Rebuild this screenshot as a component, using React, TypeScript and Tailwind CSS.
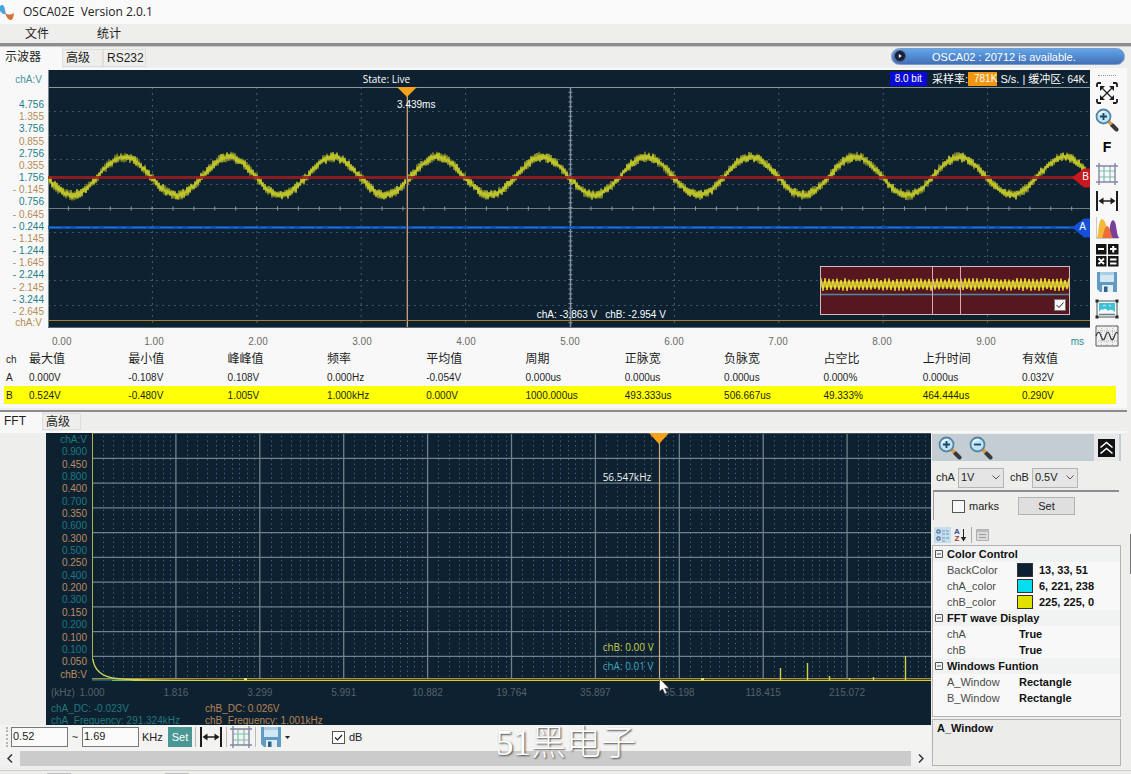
import React from 'react';

const scopeLabels = [
  '4.756', '1.355', '3.756', '0.855', '2.756', '0.355', '1.756', '- 0.145', '0.756',
  '- 0.645', '- 0.244', '- 1.145', '- 1.244', '- 1.645', '- 2.244', '- 2.145', '- 3.244', '- 2.645',
];
const timeLabels = ['0.00', '1.00', '2.00', '3.00', '4.00', '5.00', '6.00', '7.00', '8.00', '9.00'];
const fftLabels = [
  'chA:V', '0.900', '0.450', '0.800', '0.400', '0.700', '0.350', '0.600', '0.300', '0.500',
  '0.250', '0.400', '0.200', '0.300', '0.150', '0.200', '0.100', '0.100', '0.050', 'chB:V',
];
const freqLabels = ['1.000', '1.816', '3.299', '5.991', '10.882', '19.764', '35.897', '65.198', '118.415', '215.072'];

const measureHead = ['ch', '最大值', '最小值', '峰峰值', '频率', '平均值', '周期', '正脉宽', '负脉宽', '占空比', '上升时间', '有效值'];
const measureA = ['A', '0.000V', '-0.108V', '0.108V', '0.000Hz', '-0.054V', '0.000us', '0.000us', '0.000us', '0.000%', '0.000us', '0.032V'];
const measureB = ['B', '0.524V', '-0.480V', '1.005V', '1.000kHz', '0.000V', '1000.000us', '493.333us', '506.667us', '49.333%', '464.444us', '0.290V'];

const noise = (i: number) => {
  const v = Math.sin(i * 12.9898) * 43758.5453;
  return v - Math.floor(v);
};

const sineY = (x: number) => 106 - 19 * Math.cos(((x + 28) / 104.4) * 2 * Math.PI);

const buildWave = (amp: number, seed: number) => {
  const pts: string[] = [];
  for (let x = 0; x <= 1042; x += 1) {
    const side = x % 2 === 0 ? 1 : -1;
    pts.push(`${x} ${(sineY(x) + side * (1 + noise(x + seed) * amp)).toFixed(1)}`);
  }
  return 'M' + pts.join('L');
};

const buildOverview = () => {
  const pts: string[] = [];
  for (let i = 0; i <= 124; i += 1) {
    pts.push(`${i * 2} ${i % 2 === 0 ? 11 + noise(i) * 2 : 22 + noise(i) * 2}`);
  }
  return 'M' + pts.join('L');
};

const waveBright = buildWave(4, 7);
const waveDark = buildWave(4.5, 311);
const overview = buildOverview();
const minorOffsets = [10.7, 21.3, 31, 40, 48.3, 56, 63.3, 70.7, 78];

/* ---------- icons ---------- */

const ExpandIcon = () => (
  <svg width="22" height="22" viewBox="0 0 22 22" fill="none" stroke="#1c1c1c" strokeWidth="1.8">
    <path d="M1 5V2.500Q1 1 2.500 1H5M17 1h2.500Q21 1 21 2.500V5M21 17v2.500q0 1.500-1.500 1.500H17M5 21H2.500Q1 21 1 19.500V17" />
    <path d="M5 5l12 12M17 5L5 17" strokeWidth="1.2" />
    <path d="M4 4h5L4 9zM18 4v5l-5-5zM18 18h-5l5-5zM4 18v-5l5 5z" fill="#1c1c1c" stroke="none" />
  </svg>
);

const ZoomIcon = ({ plus }: { plus: boolean }) => (
  <svg width="24" height="24" viewBox="0 0 24 24" fill="none">
    <path d="M17 17l4.500 4.500" stroke="#3a3a3e" strokeWidth="4" strokeLinecap="round" />
    <path d="M13.500 13.500l3 3" stroke="#e39a3c" strokeWidth="3.500" />
    <circle cx="8.500" cy="8.500" r="7" fill="#bfe4f5" stroke="#5585a3" strokeWidth="1.800" />
    <path d="M4 7a5 5 0 0 1 6-3" stroke="#f2fbff" strokeWidth="1.500" />
    <path d={plus ? 'M5 8.500h7M8.500 5v7' : 'M5 8.500h7'} stroke="#1b4668" strokeWidth="1.800" />
  </svg>
);

const GridIcon = () => (
  <svg width="22" height="22" viewBox="0 0 22 22" fill="none">
    <path d="M3 8h16M3 14h16M8 3v16M14 3v16" stroke="#7fbfae" strokeWidth="1.2" />
    <path d="M0 3h22M0 19h22M3 0v22M19 0v22" stroke="#8484a6" strokeWidth="1.4" />
  </svg>
);

const WidthIcon = () => (
  <svg width="22" height="20" viewBox="0 0 22 20" fill="none" stroke="#1c1c1c">
    <path d="M1 0v20M21 0v20" strokeWidth="2" />
    <path d="M4 10h14" strokeWidth="1.500" />
    <path d="M2.500 10l5-3.500v7zM19.500 10l-5-3.500v7z" fill="#1c1c1c" stroke="none" />
  </svg>
);

const SpectrumIcon = () => (
  <svg width="23" height="22" viewBox="0 0 23 22">
    <path d="M.5 0v21.500H23" stroke="#c9c9cc" fill="none" />
    <path d="M12 21c2-4 1-17 5-18 4 1 3 14 6 18z" fill="#7a3f98" />
    <path d="M1 21C3 17 2 3 6 2c4 1 4 8 8 19z" fill="#f5b83c" />
    <path d="M6 21c2-4 2-11 5-12 4 1 3 8 6 12z" fill="#ec6d3a" />
  </svg>
);

const CalcIcon = () => (
  <svg width="24" height="24" viewBox="0 0 24 24">
    <path d="M1 1h10.500v10.500H1zM13 1h10.500v10.500H13zM1 13h10.500v10.500H1zM13 13h10.500v10.500H13z" fill="#141414" />
    <path d="M3 6h6M15 6h6.500M18.250 3v6.500M3.500 15.500l5.500 5.500M9 15.500L3.500 21M15 16.500h6.500M15 20.500h6.500" stroke="#fff" strokeWidth="2" />
  </svg>
);

const SaveIcon = () => (
  <svg width="22" height="22" viewBox="0 0 22 22">
    <path d="M1 1h20v20H4l-3-3z" fill="#5f9bc4" />
    <path d="M4 1h14v10H4z" fill="#d3e7f2" />
    <path d="M4 1h14v3H4z" fill="#a9cde2" />
    <path d="M6 14h11v7H6z" fill="#e3edf3" />
    <path d="M8 15.500h3.500V21H8z" fill="#2f6288" />
  </svg>
);

const PictureIcon = () => (
  <svg width="24" height="20" viewBox="0 0 24 20" fill="none">
    <path d="M2 2h20v16H2z" stroke="#4c5257" />
    <path d="M4 4h16v9q-4-4-7-1-3-4-5-1-2-2-4 2z" fill="#3ec1d8" />
    <path d="M14 6l2 1.500M8 7q1.500-1.500 3 0" stroke="#e8f8fa" />
    <path d="M4 15.500h16" stroke="#5a7f86" strokeWidth="1.500" />
    <path d="M.5.5h3v3h-3zM20.500.5h3v3h-3zM.5 16.500h3v3h-3zM20.500 16.500h3v3h-3z" fill="#2a2a2a" />
  </svg>
);

const WaveIcon = () => (
  <svg width="24" height="22" viewBox="0 0 24 22" fill="none">
    <path d="M1 1h22v20H1z" stroke="#555" fill="#f0f0f0" />
    <path d="M1 6h22M1 16h22M6.500 1v20M12 1v20M17.500 1v20" stroke="#b8b8b8" strokeDasharray="1 1" />
    <path d="M1 11c2-5 3.500-5 5 0s3 5 4.500 0 3-5 4.500 0 3 5 4.500 0 2-3 3.500-3" stroke="#333" strokeWidth="1.200" />
  </svg>
);

const FIcon = () => <span className="text-sm font-bold text-black">F</span>;

const tools = [
  { name: 'Fit', icon: <ExpandIcon /> },
  { name: 'Zoom', icon: <ZoomIcon plus /> },
  { name: 'Frequency', icon: <FIcon /> },
  { name: 'Grid', icon: <GridIcon /> },
  { name: 'Measure', icon: <WidthIcon /> },
  { name: 'Spectrum', icon: <SpectrumIcon /> },
  { name: 'Math', icon: <CalcIcon /> },
  { name: 'Save', icon: <SaveIcon /> },
  { name: 'Picture', icon: <PictureIcon /> },
  { name: 'Wave', icon: <WaveIcon /> },
];

/* ---------- oscilloscope ---------- */

const ScopePlot = () => (
  <div className="relative h-[258px] min-w-0 flex-1 overflow-hidden bg-[#0d2130]">
    <svg className="block h-full w-full" viewBox="0 0 1042 258" preserveAspectRatio="none" fill="none">
      {[41.500, 65.500, 89.500, 114.500, 162.500, 186.500, 210.500, 235.500].map((y) => (
        <path key={y} d={`M0 ${y}H1042`} stroke="#42545d" strokeDasharray="2 4" />
      ))}
      {[1, 2, 3, 4, 6, 7, 8, 9].map((n) => (
        <path key={n} d={`M${n * 104.4} 17V257`} stroke="#4a5c65" strokeDasharray="2 4" />
      ))}
      <path d="M0 17.500H1042" stroke="#8a979b" />
      <path d="M0 138.500H1042" stroke="#6f7c82" />
      <path d="M0 138.500H1042" stroke="#8f999d" strokeWidth="4" strokeDasharray="1 19.900" strokeDashoffset="-20" />
      <path d="M522.500 17V257" stroke="#8191a2" strokeWidth="1.500" />
      <path d="M522.500 17V257" stroke="#8191a2" strokeWidth="4" strokeDasharray="1 3.800" />
      <path d="M0 250.500H1042" stroke="#a87e2c" />
      <path d="M.5 0V258" stroke="#7b8a92" />
      <path d="M0 257.500H1042" stroke="#5b6a72" />
      <path d={waveDark} stroke="#8b9129" strokeWidth="1.200" />
      <path d={waveBright} stroke="#dbe02b" strokeWidth="0.700" />
      <path d="M0 107.500H1042" stroke="#a11a20" strokeWidth="3" strokeOpacity="0.850" />
      <path d="M0 157.500H1042" stroke="#0d4fb0" strokeWidth="3" />
      <path d="M0 157.500H1042" stroke="#2273c6" strokeDasharray="14 3 5 6" />
      <path d="M358.500 17V257" stroke="#6e4334" />
      <path d="M359.500 17V257" stroke="#a9a48e" />
      <path d="M349 17h20l-10 10z" fill="#f5a11c" />
      <path d="M1024 107.500l12-9h6v19h-6z" fill="#c7191e" />
      <path d="M1024 157.500l12-9h6v19h-6z" fill="#1450d8" />
    </svg>
    <div className="absolute top-[2px] left-[30.200%] font-['Open_Sans',sans-serif] text-[10px] leading-[14px] text-white">State: Live</div>
    <div className="absolute top-[28px] left-[33.500%] text-[10px] leading-[14px] text-white">3.439ms</div>
    <div className="absolute top-[238px] left-[46.900%] flex gap-2 text-[10px] leading-[14px] text-white">
      <span>chA: -3.863 V</span>
      <span>chB: -2.954 V</span>
    </div>
    <div className="absolute top-[1px] right-0 flex h-4 items-center text-[10px] whitespace-pre text-white">
      <span className="mr-[5px] bg-[#0a0ad8] px-[5px] leading-[14px]">8.0 bit</span>
      <span className="text-[11px]">采样率:</span>
      <span className="bg-[#f2960f] pl-[6px] leading-[14px]">781K</span>
      <span className="text-[11px]"> S/s. | 缓冲区: </span>
      <span className="pr-[2px]">64K.</span>
    </div>
    <div className="absolute top-[100px] right-[1px] text-[10px] leading-[14px] text-white">B</div>
    <div className="absolute top-[150px] right-[4px] text-[10px] leading-[14px] text-white">A</div>
    <div className="absolute top-[196px] right-5 h-[49px] w-[250px] border border-[#d5b9bd] bg-[#571720]">
      <svg className="block h-full w-full" viewBox="0 0 248 47" preserveAspectRatio="none" fill="none">
        <path d="M0 17.500H248" stroke="#b39a2b" strokeWidth="6" />
        <path d={overview} stroke="#f0e637" />
        <path d="M0 27.500H248" stroke="#4a8b9d" strokeWidth="1.500" />
        <path d="M111.500 0V47M139.500 0V47" stroke="#d9a8b0" />
      </svg>
      <input type="checkbox" defaultChecked aria-label="Overview" className="absolute right-[3px] bottom-[3px] h-3 w-3 appearance-none border border-[#777] bg-[#f6f6f6]" />
      <svg className="pointer-events-none absolute right-[4px] bottom-[4px]" width="10" height="10" viewBox="0 0 10 10" fill="none" stroke="#222">
        <path d="M1.500 5l2.500 2.500L8.500 2.500" />
      </svg>
    </div>
  </div>
);

const Measurements = () => (
  <div className="pr-[11px] pl-1">
    <table className="w-full table-fixed border-collapse text-left text-[10px] text-[#1e1e1e]">
      <thead>
        <tr className="h-[18px]">
          {measureHead.map((h, i) => (
            <th
              key={h}
              className={
                i === 0
                  ? 'w-[25px] p-0 pl-[2px] font-normal'
                  : i === 11
                    ? 'p-0 text-xs leading-4 font-normal'
                    : 'w-[8.930%] p-0 text-xs leading-4 font-normal'
              }
            >
              {h}
            </th>
          ))}
        </tr>
      </thead>
      <tbody>
        <tr className="h-[18px]">
          {measureA.map((v, i) => (
            <td key={i} className="p-0 first:pl-[2px]">{v}</td>
          ))}
        </tr>
        <tr className="h-[18px] bg-[#ffff05]">
          {measureB.map((v, i) => (
            <td key={i} className="p-0 first:pl-[2px]">{v}</td>
          ))}
        </tr>
      </tbody>
    </table>
  </div>
);

const ScopePanel = () => (
  <section className="mr-1 bg-[#f8f8f8] pt-[2px] pb-1">
    <div className="flex">
      <div className="min-w-0 flex-1">
        <div className="flex">
          <div className="flex w-12 flex-col pr-1 text-right text-[10px]">
            <div className="mb-[9px] h-5 pr-[2px] leading-5 text-[#46939b]">chA:V</div>
            <div className="flex h-[219px] flex-col">
              {scopeLabels.map((l, i) => (
                <div key={i} className={i % 2 === 0 ? 'flex-1 leading-3 text-[#217f88]' : 'flex-1 leading-3 text-[#b58d55]'}>{l}</div>
              ))}
            </div>
            <div className="pr-[2px] leading-[10px] text-[#b58d55]">chA:V</div>
          </div>
          <ScopePlot />
        </div>
        <div className="ml-[50px] grid h-[22px] grid-cols-10 items-center pt-1 text-[10px] text-[#6b6b6b]">
          {timeLabels.map((t, i) => (
            <div key={t} className="flex justify-between">
              <span className={i === 0 ? 'ml-[2px]' : '-translate-x-1/2'}>{t}</span>
              {i === 9 && <span className="mr-[6px] text-[#2c8a93]">ms</span>}
            </div>
          ))}
        </div>
      </div>
      <div className="flex w-[37px] flex-col items-center pr-1 pl-[1px]">
        <div className="mt-[5px] mb-[3px] w-[18px] border-t border-dotted border-[#9a9a9a]" />
        {tools.map((t) => (
          <button key={t.name} aria-label={t.name} className="flex h-[27px] w-7 items-center justify-center">
            {t.icon}
          </button>
        ))}
      </div>
    </div>
    <Measurements />
  </section>
);

/* ---------- FFT ---------- */

const FftPlot = () => (
  <div className="relative ml-[46px] h-[292px] overflow-hidden bg-[#0d2130] text-[10px]">
    <div className="flex">
      <div className="flex h-[248px] w-[46px] flex-col pt-[1px] pr-[5px] text-right">
        {fftLabels.map((l, i) => (
          <div key={i} className={(i % 2 === 0 && i > 0) || i === 19 ? 'flex-1 leading-3 text-[#bb8d63]' : 'flex-1 leading-3 text-[#1f7880]'}>{l}</div>
        ))}
      </div>
      <svg className="block h-[248px] min-w-0 flex-1" viewBox="0 0 839 248" preserveAspectRatio="none" fill="none">
        {[0, 1, 2, 3, 4, 5, 6, 7, 8, 9].map((n) =>
          minorOffsets.map((o) => (
            <path key={`${n}-${o}`} d={`M${Math.round(n * 83.9 + o) + 0.5} 3V245`} stroke="#4b6a92" strokeDasharray="1.200 3.400" />
          ))
        )}
        {[1, 2, 3, 4, 5, 6, 7, 8, 9].map((n) => (
          <path key={n} d={`M${n * 83.9} 0V247`} stroke="#71818d" strokeWidth="1.300" />
        ))}
        {[1, 2, 3, 4, 5, 6, 7, 8, 9].map((n) => (
          <path key={n} d={`M0 ${n * 24.75 + 0.7}H839`} stroke="#71818d" strokeWidth="1.300" />
        ))}
        <path d="M0 .5H839" stroke="#41535f" />
        <path d="M0 245.500H839" stroke="#a58f3a" />
        <path d="M0 246.500H839" stroke="#4d4a23" />
        <path d="M20 247.500H839" stroke="#d3cb36" />
        <path d="M0 247H40" stroke="#2d8fa3" />
        <path d="M.8 226Q3 243 24 245.500T140 247.500" stroke="#ced65a" strokeWidth="1.400" />
        <path d="M.5 0V227" stroke="#a9b350" />
        <path d="M688.500 247V235M715.500 247V230M737.500 247V243M757.500 247V245M781.500 247V244M813.500 247V223" stroke="#ccd341" strokeWidth="1.400" />
        <path d="M152 246h3M609 246h3" stroke="#e6e960" strokeWidth="2" />
        <path d="M567.500 0V247" stroke="#c9a983" strokeWidth="1.200" />
        <path d="M557 0h20l-10 11z" fill="#f5a11c" />
      </svg>
    </div>
    <div className="ml-[46px] grid h-[22px] grid-cols-10 items-center text-[#56616a]">
      {freqLabels.map((f) => (
        <div key={f} className="flex">
          <span className="-translate-x-1/2">{f}</span>
        </div>
      ))}
    </div>
    <div className="flex pl-[5px] leading-3">
      <div className="w-[154px] text-[#23777f]">chA_DC: -0.023V<br />chA_Frequency: 291.324kHz</div>
      <div className="text-[#b88457]">chB_DC: 0.026V<br />chB_Frequency: 1.001kHz</div>
    </div>
    <div className="absolute top-[253px] left-[5px] leading-[14px] text-[#56616a]">(kHz)</div>
    <div className="absolute top-[37px] left-[62.900%] font-['Open_Sans',sans-serif] leading-[14px] text-[#eef0f2]">56.547kHz</div>
    <div className="absolute top-[207px] left-[62.900%] font-['Open_Sans',sans-serif] leading-[14px] text-[#c6ce4a]">chB: 0.00 V</div>
    <div className="absolute top-[226px] left-[62.900%] font-['Open_Sans',sans-serif] leading-[14px] text-[#3aa5bd]">chA: 0.01 V</div>
    <svg className="absolute top-[245px] left-[69.300%]" width="11" height="17" viewBox="0 0 11 17">
      <path d="M.5.5v13l3-2.500 2.500 5 2-1-2.300-4.800H10z" fill="#fff" stroke="#333" strokeWidth="0.600" />
    </svg>
  </div>
);

const FftToolbar = () => (
  <div className="flex h-[26px] items-center bg-[#f3f3f2] pt-[2px] pb-1 pl-[6px] text-[11px] text-[#222]">
    <div className="mr-[3px] h-5 border-l-2 border-dotted border-[#b5b5b5]" />
    <input aria-label="From" defaultValue="0.52" className="h-5 w-[57px] border border-[#777] bg-[#fbfbfb] px-[1px] pb-[2px]" />
    <span className="w-[14px] text-center">~</span>
    <input aria-label="To" defaultValue="1.69" className="h-5 w-[57px] border border-[#777] bg-[#fbfbfb] px-[1px] pb-[2px]" />
    <span className="w-[29px] pl-[3px]">KHz</span>
    <button className="h-5 w-6 bg-[#4a9795] text-white">Set</button>
    <div className="mr-1 ml-[3px] h-5 w-px bg-[#b9b9b9]" />
    <button aria-label="Measure width"><WidthIcon /></button>
    <div className="mr-[3px] ml-1 h-5 w-px bg-[#b9b9b9]" />
    <button aria-label="Toggle grid"><GridIcon /></button>
    <div className="mr-1 ml-[3px] h-5 w-px bg-[#b9b9b9]" />
    <button aria-label="Save spectrum" className="flex items-center gap-[3px]">
      <SaveIcon />
      <svg width="5" height="3" viewBox="0 0 5 3"><path d="M0 0h5L2.500 3z" fill="#222" /></svg>
    </button>
    <label className="relative ml-[42px] flex items-center gap-1">
      <input type="checkbox" defaultChecked className="h-[13px] w-[13px] appearance-none border border-[#555] bg-white" />
      <svg className="pointer-events-none absolute left-[1px]" width="11" height="11" viewBox="0 0 11 11" fill="none" stroke="#222" strokeWidth="1.200">
        <path d="M2 5.500L4.500 8 9 3" />
      </svg>
      dB
    </label>
  </div>
);

const ScrollBar = () => (
  <div className="flex h-[15px] items-center bg-[#f1f1f1] text-[#333]">
    <button aria-label="Scroll left" className="flex w-5 justify-center">
      <svg width="6" height="9" viewBox="0 0 6 9" fill="none" stroke="#333" strokeWidth="1.500"><path d="M5 .5L1 4.500l4 4" /></svg>
    </button>
    <div className="h-full flex-1 bg-[#cbcbcb]" />
    <button aria-label="Scroll right" className="flex w-5 justify-center">
      <svg width="6" height="9" viewBox="0 0 6 9" fill="none" stroke="#333" strokeWidth="1.500"><path d="M1 .5l4 4-4 4" /></svg>
    </button>
  </div>
);

const ChannelSelect = ({ label, value }: { label: string; value: string }) => (
  <label className="flex items-center gap-[3px]">
    {label}
    <span className="relative flex items-center">
      <select defaultValue={value} className="h-5 w-[46px] appearance-none border border-[#b5b5b5] bg-[#e5e5e5] pl-[2px] text-[11px]">
        <option>{value}</option>
      </select>
      <svg className="pointer-events-none absolute right-1" width="8" height="5" viewBox="0 0 8 5" fill="none" stroke="#555"><path d="M.5.5L4 4 7.500.5" /></svg>
    </span>
  </label>
);

const PropGroup = ({ title }: { title: string }) => (
  <div className="flex h-4 items-center bg-[#f1f3f3] font-bold text-[#111]">
    <svg className="mx-[2px]" width="8" height="8" viewBox="0 0 8 8" fill="none" stroke="#555"><path d="M.5.5h7v7h-7zM2 4h4" /></svg>
    <span className="ml-[2px]">{title}</span>
  </div>
);

const PropRow = ({ name, value, swatch }: { name: string; value: string; swatch?: string }) => (
  <div className="flex h-4 items-center pl-[14px]">
    <span className="w-[70px] text-[#4a4a4a]">{name}</span>
    {swatch && <span className={`mr-[6px] h-[14px] w-4 border border-[#333] ${swatch}`} />}
    <span className={swatch ? 'font-bold text-[#111]' : 'pl-[2px] font-bold text-[#111]'}>{value}</span>
  </div>
);

const SidePanel = () => (
  <aside className="ml-[1px] flex w-[189px] flex-col text-[11px] text-[#222]">
    <div className="mt-[1px] flex h-[27px] items-center bg-[#c4ccd4] pr-[2px] pl-[6px]">
      <button aria-label="Zoom in" className="mr-[7px]"><ZoomIcon plus /></button>
      <button aria-label="Zoom out"><ZoomIcon plus={false} /></button>
      <button aria-label="Collapse" className="ml-auto flex h-full w-[25px] items-center justify-center bg-[#e6e8ea]">
        <svg width="17" height="18" viewBox="0 0 17 18" fill="none">
          <path d="M0 0h17v18H0z" fill="#111" />
          <path d="M2.500 8.500l6-5 6 5M2.500 14.500l6-5 6 5" stroke="#fff" strokeWidth="1.600" />
        </svg>
      </button>
    </div>
    <div className="flex h-[29px] items-center gap-[6px] pt-[4px] pl-1">
      <ChannelSelect label="chA" value="1V" />
      <ChannelSelect label="chB" value="0.5V" />
    </div>
    <div className="mr-[2px] ml-[1px] flex h-[30px] items-center border-t-2 border-l border-t-[#8f8b90] border-l-[#9c9c9c] pl-[18px]">
      <label className="flex w-[66px] items-center gap-1">
        <input type="checkbox" className="h-[13px] w-[13px] appearance-none border border-[#555] bg-[#f8f8f8]" />
        marks
      </label>
      <button className="h-[18px] w-[57px] border border-[#b2b2b2] bg-[#dfdfdf]">Set</button>
    </div>
    <div className="mt-[5px] flex h-5 items-center gap-[3px] pl-[2px]">
      <button aria-label="Categorized" className="flex h-4 w-[17px] items-center justify-center bg-[#c3dff0]">
        <svg width="14" height="13" viewBox="0 0 14 13" fill="none">
          <path d="M1 1h3v3H1zM1 8h3v3H1z" stroke="#4a5a86" />
          <path d="M6 2h3M10 2h3M6 5h3M10 5h3M6 9h3M10 9h3M6 12h3" stroke="#7a94b0" />
        </svg>
      </button>
      <button aria-label="Alphabetical" className="flex items-center">
        <span className="flex flex-col text-[8px] leading-[7px] font-bold">
          <span className="text-[#3a4d9c]">A</span>
          <span className="text-[#9c3a3a]">Z</span>
        </span>
        <svg width="7" height="13" viewBox="0 0 7 13" fill="none"><path d="M3.500 0v10" stroke="#222" /><path d="M.8 8h5.400L3.500 12.500z" fill="#222" /></svg>
      </button>
      <div className="mx-[1px] h-4 w-px bg-[#aaa]" />
      <button aria-label="Property pages">
        <svg width="13" height="12" viewBox="0 0 13 12" fill="none"><path d="M.5.5h12v11H.5z" fill="#dadada" stroke="#b0b0b0" /><path d="M1 2h11M3 5.500h7M3 8.500h7" stroke="#9c9c9c" /></svg>
      </button>
    </div>
    <div className="h-[172px] border border-[#b5b1b5] bg-[#f8f8f8]">
      <PropGroup title="Color Control" />
      <PropRow name="BackColor" value="13, 33, 51" swatch="bg-[#0d2133]" />
      <PropRow name="chA_color" value="6, 221, 238" swatch="bg-[#06ddee]" />
      <PropRow name="chB_color" value="225, 225, 0" swatch="bg-[#e1e100]" />
      <PropGroup title="FFT wave Display" />
      <PropRow name="chA" value="True" />
      <PropRow name="chB" value="True" />
      <PropGroup title="Windows Funtion" />
      <PropRow name="A_Window" value="Rectangle" />
      <PropRow name="B_Window" value="Rectangle" />
    </div>
    <div className="mt-[2px] h-[47px] border border-[#b5b1b5] bg-[#ececea] px-1 font-bold text-[#111]">A_Window</div>
  </aside>
);

export default function App() {
  return (
    <div className="relative min-h-screen overflow-hidden bg-[#eeeeec] font-['Liberation_Sans','Noto_Sans_CJK_SC',sans-serif]">
      <header className="flex h-6 items-center bg-[#f9f9f9]">
        <svg className="mr-[9px]" width="14" height="16" viewBox="0 0 14 16">
          <path d="M0 2Q4-1 5 6l1 4H3L0 7z" fill="#4ba3dc" />
          <path d="M5 9q4 3 9 0-1 8-4 7-3-1-5-7z" fill="#d5703a" />
        </svg>
        <h1 className="font-['Open_Sans',sans-serif] text-xs whitespace-pre text-[#222]">OSCA02E  Version 2.0.1</h1>
      </header>
      <nav className="flex h-[19px] items-center pl-[25px] text-xs text-[#1e1e1e]">
        <button className="mr-12 leading-4">文件</button>
        <button className="leading-4">统计</button>
      </nav>
      <div className="h-1 border-b border-[#c9c9c9] bg-[#8d8d8d]" />
      <div className="flex h-[21px] items-center text-xs text-[#1e1e1e]">
        <button className="h-full w-[62px] bg-[#f8f8f8] pb-[2px] pl-[5px] text-left leading-4">示波器</button>
        <button className="h-[18px] w-[41px] border border-[#dedede] px-[3px] text-left leading-4">高级</button>
        <button className="h-[18px] w-[43px] border border-[#dedede] px-[3px] text-left leading-4">RS232</button>
        <div className="mr-[6px] mb-[3px] ml-auto flex h-[17px] w-[234px] items-center rounded-full border border-[#7f9cc8] bg-gradient-to-b from-[#62a6ea] to-[#4270b6] text-[11px] text-white">
          <svg className="ml-[2px]" width="12" height="12" viewBox="0 0 12 12">
            <circle cx="6" cy="6" r="5.500" fill="#14203c" stroke="#5a5a78" />
            <path d="M4.800 4l3 2-3 2z" fill="#fff" />
          </svg>
          <span className="ml-[26px] pt-[2px]">OSCA02 : 20712 is available.</span>
        </div>
      </div>
      <ScopePanel />
      <div className="mr-1 mt-[2px] border-t-2 border-[#8c8c8c]" />
      <div className="flex h-[19px] items-center text-xs text-[#1e1e1e]">
        <button className="h-full w-[42px] bg-[#f8f8f8] pb-[2px] pl-1 text-left leading-4">FFT</button>
        <button className="h-[17px] w-[39px] border border-[#dedede] px-[3px] text-left leading-4">高级</button>
      </div>
      <div className="mr-1 h-[2px] bg-[#f8f8f8]" />
      <main className="relative mr-[10px] flex">
        <div className="min-w-0 flex-1">
          <FftPlot />
          <FftToolbar />
          <ScrollBar />
        </div>
        <SidePanel />
        <div className="pointer-events-none absolute top-[290px] left-[496px] flex items-center font-['Liberation_Serif','Noto_Sans_CJK_SC',serif] text-[35px] leading-[42px] font-light text-white [text-shadow:1px_1px_2px_#444]">
          51黑电子
        </div>
      </main>
      <footer className="mt-1 flex border-t border-[#cfcfcf] pt-[2px] pl-[47px]">
        <div className="mr-[94px] h-[2px] w-6 bg-[#bdbdbd]" />
        <div className="h-[2px] w-6 bg-[#bdbdbd]" />
      </footer>
      <div className="absolute top-[534px] right-0 h-10 w-px bg-[#777]" />
    </div>
  );
}
